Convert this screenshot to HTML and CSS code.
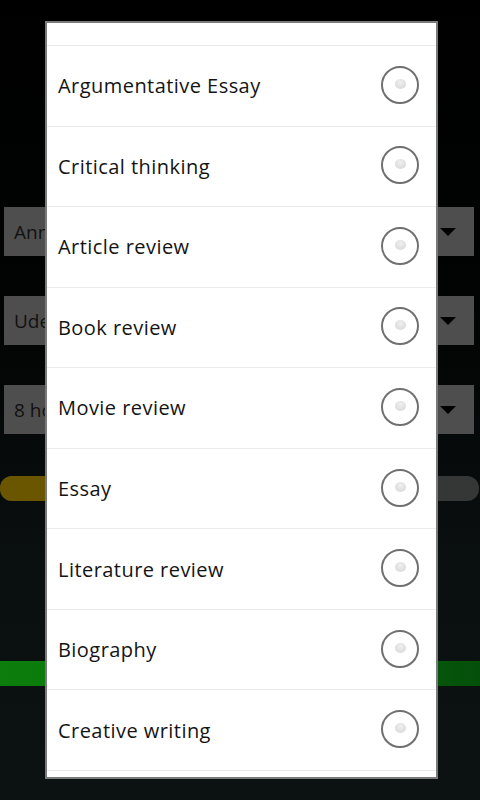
FILE: index.html
```html
<!DOCTYPE html>
<html>
<head>
<meta charset="utf-8">
<link rel="stylesheet" href="styles.css">
</head>
<body>
<div class="screen">
  <div class="form">
    <div class="select"><span class="select-text">Annotated bibliography</span><span class="caret"></span></div>
    <div class="select"><span class="select-text">Udergraduate</span><span class="caret"></span></div>
    <div class="select"><span class="select-text">8 hours</span><span class="caret"></span></div>
    <div class="progress"><div class="progress-fill"></div></div>
    <div class="green-bar"></div>
  </div>

  <div class="dialog">
    <div class="row row-partial"></div>
    <div class="row"><span class="label">Argumentative Essay</span><span class="radio"></span></div>
    <div class="row"><span class="label">Critical thinking</span><span class="radio"></span></div>
    <div class="row"><span class="label">Article review</span><span class="radio"></span></div>
    <div class="row"><span class="label">Book review</span><span class="radio"></span></div>
    <div class="row"><span class="label">Movie review</span><span class="radio"></span></div>
    <div class="row"><span class="label">Essay</span><span class="radio"></span></div>
    <div class="row"><span class="label">Literature review</span><span class="radio"></span></div>
    <div class="row"><span class="label">Biography</span><span class="radio"></span></div>
    <div class="row"><span class="label">Creative writing</span><span class="radio"></span></div>
  </div>
</div>
</body>
</html>
```

FILE: styles.css
```css
* { box-sizing: border-box; }
html, body {
  margin: 0;
  padding: 0;
  width: 480px;
  height: 800px;
  overflow: hidden;
}
body {
  font-family: "Open Sans", "DejaVu Sans", sans-serif;
  background: linear-gradient(to bottom, #000 0px, #020303 300px, #0a0f0f 560px, #0c1212 800px);
}
.screen {
  position: relative;
  width: 480px;
  height: 800px;
}
.form {
  display: flex;
  flex-direction: column;
  padding-top: 207px;
}
.select {
  margin: 0 6px 40px 4px;
  height: 49px;
  background: #4e4e4e;
  display: flex;
  align-items: center;
  justify-content: space-between;
  padding: 0 18px 0 10px;
}
.select-text {
  font-size: 19px;
  color: #111;
  width: 31px;
  overflow: hidden;
  white-space: nowrap;
}
.caret {
  width: 0;
  height: 0;
  border-left: 8px solid transparent;
  border-right: 8px solid transparent;
  border-top: 8px solid #000;
}
.progress {
  margin-top: 2px;
  height: 25px;
  margin-right: 1px;
  border-radius: 12px;
  background: #353737;
  overflow: hidden;
}
.progress-fill {
  width: 200px;
  height: 100%;
  background: #6b5600;
}
.green-bar {
  margin-top: 160px;
  height: 25px;
  background: linear-gradient(to right, #0c7e0c 0%, #0a6e0a 50%, #04500a 100%);
}
.dialog {
  position: absolute;
  left: 45px;
  top: 21px;
  width: 393px;
  height: 758px;
  background: #fff;
  border: 2px solid #7a7a7a;
  display: flex;
  flex-direction: column;
}
.row {
  height: 80.55px;
  flex: 0 0 auto;
  border-bottom: 1px solid #ececec;
  display: flex;
  align-items: center;
  justify-content: space-between;
  padding: 0 17px 2px 11px;
}
.row-partial {
  height: 23px;
}
.label {
  font-size: 20px;
  color: #141414;
  letter-spacing: 0.45px;
  margin-top: 2px;
}
.radio {
  width: 38px;
  height: 38px;
  border-radius: 50%;
  border: 2px solid #707070;
  display: flex;
  align-items: center;
  justify-content: center;
}
.radio::after {
  content: "";
  width: 11px;
  height: 10px;
  margin-top: -2px;
  border-radius: 50%;
  background: radial-gradient(circle at 50% 35%, #f0f0f0 0%, #d4d4d4 100%);
}
```
